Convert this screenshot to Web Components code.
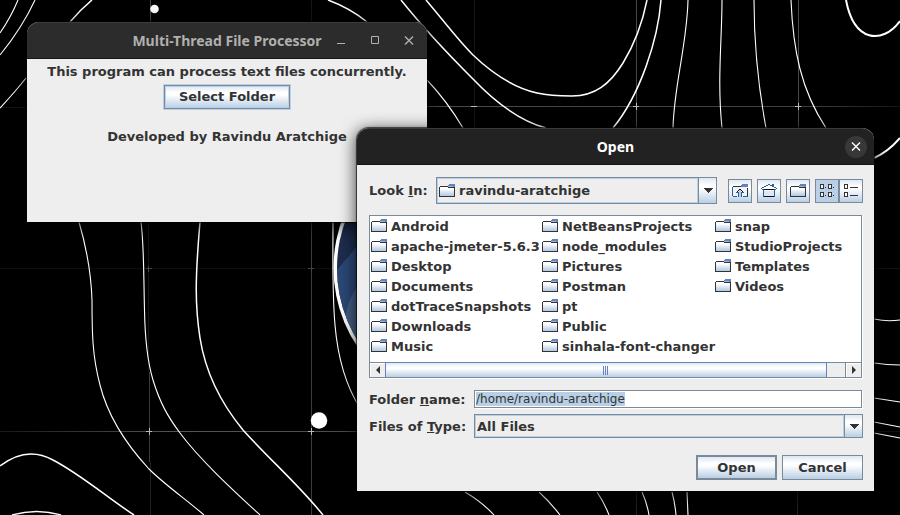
<!DOCTYPE html>
<html lang="en">
<head>
<meta charset="utf-8">
<title>Multi-Thread File Processor</title>
<style>
html, body { margin: 0; height: 100%; background: #000; overflow: hidden; }
body { font: bold 13px/15px "DejaVu Sans", sans-serif; color: #333; }
</style>
</head>
<body>
<desk-top>
  <app-window class="main" heading="Multi-Thread File Processor" controls="all">
    <processor-panel></processor-panel>
  </app-window>
  <app-window class="dialog" heading="Open" active>
    <file-chooser></file-chooser>
  </app-window>
</desk-top>

<script>
const define = (name, html, setup) => customElements.define(name, class extends HTMLElement {
  constructor() {
    super();
    this.attachShadow({ mode: 'open' }).innerHTML = html;
  }
  connectedCallback() { if (setup) setup.call(this, this.shadowRoot); }
});

define('desk-wallpaper', `
<style>
:host { display: block; }
svg { display: block; width: 100%; height: 100%; }
</style>
<svg viewBox="0 0 900 515" preserveAspectRatio="xMidYMid slice" fill="none" stroke="#fff" aria-hidden="true">
  <defs>
    <linearGradient id="r" gradientUnits="userSpaceOnUse" x1="427" y1="0" x2="900" y2="0"><stop offset="0" stop-color="#4a4a4a"/><stop offset=".8" stop-color="#404040"/><stop offset="1" stop-color="#151515"/></linearGradient>
    <linearGradient id="l" gradientUnits="userSpaceOnUse" x1="0" y1="0" x2="360" y2="0"><stop offset="0" stop-color="#181818"/><stop offset=".5" stop-color="#555"/><stop offset="1" stop-color="#4a4a4a"/></linearGradient>
    <clipPath id="c"><circle cx="475" cy="268" r="138"/></clipPath>
    <clipPath id="v"><path d="M320 200h45v200h-45z"/></clipPath>
  </defs>
  <g shape-rendering="crispEdges">
    <path d="M0 107h27v1H0z" fill="#151515" stroke="none"/>
    <path d="M427 106h473v1H427z" fill="url(#r)" stroke="none"/>
    <path d="M0 268h360v1H0z" fill="#0e0e0e" stroke="none"/>
    <path d="M0 431h360v1H0z" fill="url(#l)" stroke="none"/>
    <path d="M874 431.500h26M874 268.500h26" stroke="#111"/>
    <path d="M150.500 0v22M636.500 0v130M798.500 0v130" stroke="#484848"/>
    <path d="M311.500 0v22M148.500 222v150M474.500 0v130" stroke="#151515"/>
    <path d="M149.500 372v90M311.500 222v293" stroke="#3c3c3c"/>
    <path d="M150.500 462v53M636.500 490v25M797.500 490v25" stroke="#202020"/>
    <path d="M471 106.500h6M633 106.500h6M636.500 103v7M795 106.500h6M798.500 103v7M146 431.500h6M149.500 428v7M308 431.500h6M311.500 428v7" stroke="#bbb"/>
    <path d="M146 268.500h6M148.500 266v6M308 268.500h6M311.500 266v6" stroke="#444"/>
  </g>
  <g stroke-width="1.100">
    <path d="M18 0Q11 17 0 33M35 0Q22 28 0 55M26 78Q15 92 0 108M427 80Q447 101 463 128"/>
    <path d="M688 0C687 45 674 85 673 128M722 0C722 40 717 80 722 128M754 0C754 45 758 85 766 128M791 0C793 50 801 90 826 128"/>
    <path d="M79 222C86 246 91 270 92 300C92 330 92 355 100 385C107 413 125 443 149 469C165 485 187 500 204 515"/>
    <path d="M141 222C144 245 143.500 270 144.500 310C145 340 147 360 153 380C160 403 168 417 180 433C200 460 235 492 260 515"/>
    <path d="M333 222C333 255 332 290 335 325C338 360 346 386 360 408"/>
    <path d="M465 492Q482 502 494 515M539 492Q550 502 560 515M597 492Q604 502 609 515M642 492Q647 503 649 515M672 492Q675 503 676 515M687 492L688 515"/>
    <path d="M874 319Q887 322 900 320M874 363Q887 365 900 365M874 398L900 402M874 422L900 427M874 433L900 438"/>
  </g>
  <g stroke-width="1.500">
    <path d="M92 0Q80 10 70 22M328 0Q350 8 367 22"/>
    <path d="M401 0C425 30 450 56 473 79C495 102 520 121 546 128"/>
    <path d="M426 0C443 20 458 40 473 55C495 76 515 88 537 93C550 96 562 96 572 96C595 96 610 84 623 63C637 40 643 20 647 0"/>
    <path d="M661 0C658 40 640 95 613 128"/>
    <path d="M200 222C195 280 195 305 200 338C205 370 220 402 243 430C270 460 298 484 323 515"/>
    <path d="M0 466C18 452 35 450 53 460C80 474 108 498 134 515M12 515Q37 508 61 515"/>
  </g>
  <path d="M846 0C854 42 882 45 900 21M874 158Q888 152 900 138" stroke-width="2"/>
  <g fill="#fff" stroke="none">
    <circle cx="154.500" cy="9" r="4.300"/><circle cx="319" cy="420.500" r="8.300"/>
    <g clip-path="url(#v)">
      <circle cx="475" cy="268" r="141.500"/>
      <g clip-path="url(#c)">
        <path d="M330 120h300v300H330z" fill="#1e2d4e"/>
        <path d="M330 278L360 243V420H330z" fill="#2c4876"/>
        <path d="M345 320Q347 300 360 282V420z" fill="#465e84"/>
      </g>
    </g>
  </g>
</svg>`);

define('desk-top', `
<style>
:host { display: block; position: relative; height: 100%; min-width: 880px; }
desk-wallpaper { position: absolute; inset: 0; }
::slotted(app-window) { position: absolute; }
::slotted(.main) { left: 27px; right: 473px; top: 22px; }
::slotted(.dialog) { left: 357px; right: 26px; top: 128px; }
</style>
<desk-wallpaper></desk-wallpaper><slot></slot>`);

define('app-window', `
<style>
:host { display: block; background: #eee; border-radius: 12px 12px 0 0; box-shadow: 0 0 1px 1px #000a, 0 3px 16px 2px #000a; }
header { display: grid; grid-template-columns: 1fr auto 1fr; align-items: center; height: 37px; box-sizing: border-box;
  background: #2c2c2c; color: #b0b0ac; border-radius: 12px 12px 0 0; border-top: 1px solid #3a3a3a; border-bottom: 1px solid #151515; }
:host([active]) header { background: #222; color: #fff; }
h1 { grid-column: 2; margin: 0; font: bold 14px/20px "Noto Sans", sans-serif; white-space: nowrap; }
nav { display: flex; justify-content: flex-end; gap: 12px; padding-right: 7px; }
button { width: 22px; height: 22px; padding: 0; border: 0; border-radius: 50%; background: none; color: inherit; display: grid; place-items: center; }
:host([active]) button { background: #383838; }
:host(:not([controls])) .extra { display: none; }
svg { display: block; width: 12px; height: 12px; fill: none; stroke: currentColor; }
</style>
<header>
  <h1></h1>
  <nav>
    <button class="extra" aria-label="Minimize"><svg viewBox="0 0 12 12"><path d="M2 8.500h8"/></svg></button>
    <button class="extra" aria-label="Maximize"><svg viewBox="0 0 12 12"><path d="M2.500 1.500h7v7h-7z"/></svg></button>
    <button aria-label="Close"><svg viewBox="0 0 12 12"><path d="M2 1.500l8 8M10 1.500l-8 8" stroke-width="1.400"/></svg></button>
  </nav>
</header>
<slot></slot>`, function (root) { root.querySelector('h1').textContent = this.getAttribute('heading'); });

define('metal-button', `
<style>
:host { display: inline-grid; }
button { font: inherit; color: inherit; padding: 4px 14px; border: 1px solid #7a8a99; background: linear-gradient(#dde8f3, #fff 30%, #fff 40%, #b8cfe5); }
:host([default]) button { border-width: 2px; padding: 3px 13px; }
:host([focused]) button { outline: 1px solid #b8cfe5; outline-offset: 0; box-shadow: inset 0 0 0 1px #b8cfe5; }
:host([icon]) button { width: 24px; height: 24px; padding: 0; display: grid; place-items: center; }
:host([pressed]) button { background: #b8cfe5; }
</style>
<button><slot></slot></button>`, function (root) {
  const label = this.getAttribute('label');
  if (label) root.querySelector('button').setAttribute('aria-label', label);
});

define('folder-icon', `
<style>:host { display: block; width: 16px; height: 16px; } svg { display: block; }</style>
<svg width="16" height="16" viewBox="0 0 16 16" shape-rendering="crispEdges" aria-hidden="true">
  <defs><linearGradient id="g" x2="0" y2="1"><stop offset=".2" stop-color="#fff"/><stop offset="1" stop-color="#b0c8e0"/></linearGradient></defs>
  <path d="M1 4h14v9H1z" fill="url(#g)"/>
  <path d="M0 4h1v9H0zM1 3h8v1H1zM0 13h16v1H0zM15 4h1v10h-1zM9 4h7v1H9z" fill="#333"/>
  <path d="M10 1h6v1h-6zM9 2h7v2H9z" fill="#6382bf"/><path d="M9 3h5v1H9z" fill="#a3b8cc"/>
</svg>`);

define('processor-panel', `
<style>
:host { display: flex; flex-direction: column; align-items: center; min-height: 158px; padding-top: 5px; }
p { margin: 0; white-space: nowrap; }
metal-button { margin: 6px 0 20px; line-height: 14px; }
</style>
<p>This program can process text files concurrently.</p>
<metal-button focused>Select Folder</metal-button>
<p>Developed by Ravindu Aratchige</p>`);

define('metal-combo', `
<style>
:host { display: grid; grid-template-columns: auto 1fr 18px; align-items: stretch; border: 1px solid #7a8a99; background: #eee; box-sizing: border-box; }
.icon { grid-area: 1 / 1; align-self: center; margin-left: 2px; }
:host(:not([folder])) .icon { display: none; }
::slotted(select) { appearance: none; grid-area: 1 / 1 / 2 / 3; min-width: 0; margin: 0; border: 1px solid #b8cfe5; border-radius: 0; padding: 0 1px; background: none; font: inherit; color: inherit; outline: 0; }
:host([folder]) ::slotted(select) { padding-left: 21px; }
.arrow { grid-area: 1 / 3; display: grid; place-items: center; border-left: 1px solid #7a8a99; background: linear-gradient(#dde8f3, #fff 30%, #fff 40%, #b8cfe5); }
</style>
<folder-icon class="icon"></folder-icon>
<slot></slot>
<span class="arrow"><svg width="10" height="5" shape-rendering="crispEdges" aria-hidden="true"><path d="M0 0h10L5 5z" fill="#333"/></svg></span>`);

define('file-list', `
<style>
:host { display: block; border: 1px solid #7a8a99; background: #fff; box-shadow: 1px 1px #fff; }
ul { margin: 0; padding: 0 0 6px; list-style: none; display: grid; grid-template: repeat(7, 20px) / 171px 173px 1fr; grid-auto-flow: column; overflow: hidden; }
li { display: flex; align-items: center; gap: 4px; padding-left: 1px; white-space: nowrap; }
.bar { display: flex; box-sizing: border-box; height: 15px; background: #eee; border-top: 1px solid #7a8a99; }
button { width: 15px; padding: 0; border: 0; background: #eee; display: grid; place-items: center; box-shadow: inset 1px 1px #fff; }
.track { flex: 1; display: flex; border-right: 1px solid #7a8a99; }
.thumb { width: 96%; margin-top: -1px; box-sizing: border-box; border: 1px solid #6382bf; border-bottom-width: 0; display: grid; place-items: center; background: linear-gradient(#dde8f3, #fff 30%, #fff 40%, #b8cfe5); }
</style>
<ul></ul>
<div class="bar">
  <button aria-label="Scroll left"><svg width="4" height="8"><path d="M4 0v8L0 4z" fill="#333"/></svg></button>
  <div class="track"><div class="thumb"><svg width="6" height="9" shape-rendering="crispEdges"><path d="M.5 0v9M2.500 0v9M4.500 0v9" stroke="#6382bf"/></svg></div></div>
  <button aria-label="Scroll right"><svg width="4" height="8"><path d="M0 0v8l4-4z" fill="#333"/></svg></button>
</div>`, function (root) {
  root.querySelector('ul').innerHTML = ['Android', 'apache-jmeter-5.6.3', 'Desktop', 'Documents', 'dotTraceSnapshots', 'Downloads', 'Music',
    'NetBeansProjects', 'node_modules', 'Pictures', 'Postman', 'pt', 'Public', 'sinhala-font-changer',
    'snap', 'StudioProjects', 'Templates', 'Videos'].map(n => `<li><folder-icon></folder-icon><span>${n}</span></li>`).join('');
});

define('file-chooser', `
<style>
:host { display: block; padding: 12px 11px 11px 12px; }
.look { display: grid; grid-template-columns: 67px 1fr auto; align-items: center; }
.look metal-combo { height: 27px; margin-right: 11px; }
.tools { display: flex; gap: 5px; }
.pair { display: flex; }
file-list { margin: 11px 1px 12px 0; }
.form { display: grid; grid-template-columns: 105px 1fr; row-gap: 6px; align-items: center; margin-bottom: 17px; }
.form .name { margin-right: 1px; }
label { white-space: nowrap; }
input { box-sizing: border-box; width: 100%; height: 18px; margin: 0; padding: 0 1px; border: 1px solid #7a8a99; background: #fff; font: 12px/15px "DejaVu Sans", sans-serif; color: #333; outline: 0; display: block; box-shadow: 1px 1px #fff; }
input::selection { background: #b8cfe5; color: #333; }
.form metal-combo { height: 24px; }
.buttons { display: grid; grid-template-columns: 81px 81px; gap: 5px; justify-content: end; }
svg { display: block; }
</style>
<div class="look">
  <label for="look">Look <u>I</u>n:</label>
  <metal-combo folder><select id="look"><option>ravindu-aratchige</option></select></metal-combo>
  <div class="tools">
    <metal-button icon label="Up One Level"><svg width="16" height="16" shape-rendering="crispEdges">
      <path d="M1 4h14v9H1z" fill="#eef4fa"/><path d="M0 4h1v9H0zM1 3h8v1H1zM1 13h4v1H1zM11 13h5v1h-5zM15 5h1v8h-1z" fill="#2c5f95"/><path d="M1 3h8v1H1zM15 5h1v8h-1z" fill="#333"/>
      <path d="M10 1h6v1h-6zM9 2h7v2H9z" fill="#6382bf"/>
      <path d="M7 6h2v1H7zM6 7h1v1H6zM9 7h1v1H9zM5 8h1v1H5zM10 8h1v1h-1z" fill="#111"/><path d="M4 9h3v1H4zM9 9h3v1H9zM6 10h1v4H6zM9 10h1v4H9z" fill="#2c5f95"/><path d="M7 7h2v7H7z" fill="#b8cfe5"/>
    </svg></metal-button>
    <metal-button icon label="Home"><svg width="16" height="16" shape-rendering="crispEdges">
      <path d="M3 8h10v5H3z" fill="#dce8f3"/>
      <path d="M7 1h2v1H7zM5 2h2v1H5zM9 2h2v1H9zM3 3h2v1H3zM11 3h2v1h-2zM1 4h2v1H1zM13 4h2v1h-2zM0 5h1v1H0zM15 5h1v1h-1zM1 6h14v1H1zM2 7h1v6H2zM13 7h1v6h-1zM11 1h2v2h-2zM2 13h12v1H2z" fill="#2c5f95"/>
      <path d="M3 6h10v1H3zM3 13h10v1H3z" fill="#111"/>
    </svg></metal-button>
    <metal-button icon label="Create New Folder"><folder-icon></folder-icon></metal-button>
    <div class="pair">
      <metal-button icon pressed label="List"><svg width="16" height="16" shape-rendering="crispEdges" fill="none" stroke="#333">
        <path d="M1.500 1.500h3v4h-3zM9.500 1.500h3v4h-3zM1.500 9.500h3v4h-3zM9.500 9.500h3v4h-3z" fill="#eef4fa"/><path d="M6 4.500h1M14 4.500h1M6 12.500h1M14 12.500h1"/>
      </svg></metal-button>
      <metal-button icon label="Details"><svg width="16" height="16" shape-rendering="crispEdges" fill="none" stroke="#333">
        <path d="M1.500 1.500h3v4h-3zM1.500 9.500h3v4h-3z" fill="#fff"/><path d="M7 4.500h8M7 12.500h8"/>
      </svg></metal-button>
    </div>
  </div>
</div>
<file-list></file-list>
<div class="form">
  <label for="name">Folder <u>n</u>ame:</label>
  <div class="name"><input id="name" type="text" value="/home/ravindu-aratchige"></div>
  <label for="type">Files of <u>T</u>ype:</label>
  <metal-combo><select id="type"><option>All Files</option></select></metal-combo>
</div>
<div class="buttons">
  <metal-button default>Open</metal-button>
  <metal-button>Cancel</metal-button>
</div>`, function (root) {
  const field = root.querySelector('input');
  field.focus();
  field.select();
});
</script>
</body>
</html>
